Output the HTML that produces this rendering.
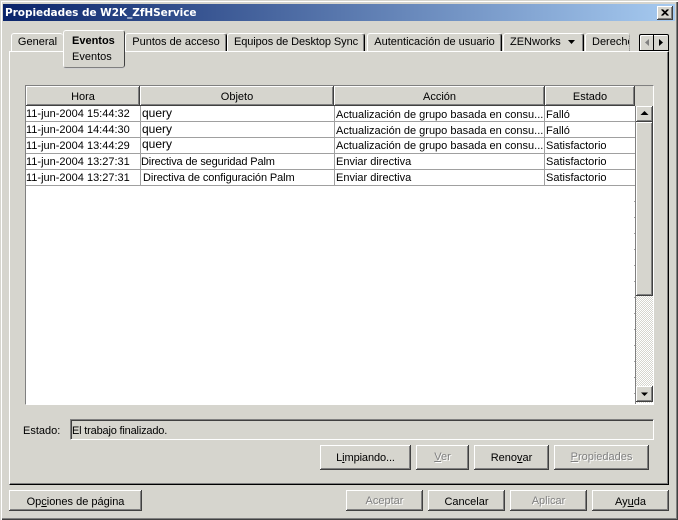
<!DOCTYPE html>
<html lang="es"><head><meta charset="utf-8"><style>
html,body{margin:0;padding:0}
body{width:678px;height:520px;position:relative;overflow:hidden;background:#d6d5ce;font:11px/13px "Liberation Sans",sans-serif;color:#000}
div,span.a{position:absolute;box-sizing:border-box;white-space:nowrap}
.btn{box-shadow:inset -1px -1px 0 #404040,inset 1px 1px 0 #fff,inset -2px -2px 0 #808080;text-align:center;background:#d6d5ce}
.dis{color:#808080;text-shadow:1px 1px 0 #fff}
.tab{top:33px;height:18px;border-top:1px solid #fff;border-left:1px solid #fff;border-right:1px solid #000;box-shadow:inset -1px 0 0 #808080;border-radius:3px 3px 0 0;padding-top:2px;text-align:center}
.h{top:86px;height:20px;background:#d6d5ce;box-shadow:inset -1px -1px 0 #404040,inset 1px 1px 0 #fff,inset -2px -2px 0 #808080;text-align:center;padding-top:4px;line-height:14px}
.t{line-height:13px}
.l{left:26px;width:609px;height:1px;background:#a0a0a0}
.v{top:106px;height:80px;width:1px;background:#a0a0a0}
u{text-decoration:underline}
</style></head><body>
<div style="left:0;top:0;width:678px;height:520px;box-shadow:inset 1px 1px 0 #d6d5ce,inset 2px 2px 0 #fff,inset -1px -1px 0 #404040,inset -2px -2px 0 #808080"></div>
<div style="left:3px;top:4px;width:672px;height:17px;background:linear-gradient(90deg,#0a246a,#a6caf0)"></div>
<div style="left:5px;top:6px;color:#fff;font:bold 10.5px/15px 'DejaVu Sans',sans-serif;letter-spacing:-.04px">Propiedades de W2K_ZfHService</div>
<div class="btn" style="left:657px;top:6px;width:16px;height:14px"><svg width="16" height="14" style="position:absolute;left:0;top:0"><path d="M4.500 3.500l6 6M5.500 3.500l6 6M10.500 3.500l-6 6M11.500 3.500l-6 6" stroke="#000" stroke-width="1" fill="none"/></svg></div>

<!-- panel -->
<div style="left:9px;top:51px;width:660px;height:434px;border-top:1px solid #fff;border-left:1px solid #fff;border-right:1px solid #000;border-bottom:1px solid #000;box-shadow:inset -1px -1px 0 #808080"></div>

<!-- tabs -->
<div class="tab" style="left:11px;width:52px;border-right:0;box-shadow:none">General</div>
<div class="tab" style="left:125px;width:102px">Puntos de acceso</div>
<div class="tab" style="left:227px;width:138px;letter-spacing:-.08px">Equipos de Desktop Sync</div>
<div class="tab" style="left:367px;width:135px">Autenticación de usuario</div>
<div class="tab" style="left:503px;width:81px;text-align:left;padding-left:6px">ZENworks<svg width="8" height="4" style="position:absolute;left:64px;top:6px"><path d="M0 0h7L3.500 4z"/></svg></div>
<div class="tab" style="left:585px;width:45px;border-right:1px dotted #808080;box-shadow:none;text-align:left;padding-left:6px;overflow:hidden">Derecho</div>
<div style="left:63px;top:30px;width:62px;height:38px;background:#d6d5ce;border:1px solid #fff;border-right:1px solid #404040;border-bottom:1px solid #808080;border-radius:3px;box-shadow:0 1px 0 #d0d0d0"></div>
<div class="t" style="left:72px;top:35px;font-weight:bold">Eventos</div>
<div class="t" style="left:72px;top:51px">Eventos</div>
<div style="left:639px;top:34px;width:30px;height:17px;border:1px solid #000;border-radius:2px 2px 0 0;box-shadow:inset 1px 1px 0 #fff;background:#d6d5ce"></div>
<div style="left:653px;top:34px;width:1px;height:16px;background:#000"></div>
<svg width="30" height="17" style="position:absolute;left:639px;top:34px"><path d="M10 5v7L6 8.500z" fill="#808080"/><path d="M20 5v7l4-3.500z" fill="#000"/></svg>

<!-- table -->
<div style="left:25px;top:85px;width:629px;height:320px;background:#fff;border-top:1px solid #808080;border-left:1px solid #808080;border-right:1px solid #fff;border-bottom:1px solid #fff"></div>
<div style="left:26px;top:86px;width:627px;height:20px;background:#d6d5ce"></div>
<div class="h" style="left:26px;width:114px">Hora</div>
<div class="h" style="left:140px;width:194px">Objeto</div>
<div class="h" style="left:334px;width:211px">Acción</div>
<div class="h" style="left:545px;width:90px">Estado</div>

<div class="l" style="top:121px"></div><div class="l" style="top:137px"></div><div class="l" style="top:153px"></div><div class="l" style="top:169px"></div><div class="l" style="top:185px"></div>
<div class="v" style="left:140px"></div><div class="v" style="left:334px"></div><div class="v" style="left:544px"></div>
<div style="left:634px;top:201px;width:1px;height:200px;background:repeating-linear-gradient(#a0a0a0 0 1px,transparent 1px 16px)"></div>

<div class="t" style="left:26px;top:108px">11-jun-2004 15:44:32</div>
<div class="t" style="left:142px;top:107px;font-size:12px">query</div>
<div class="t" style="left:336px;top:109px">Actualización de grupo basada en consu...</div>
<div class="t" style="left:546px;top:109px">Falló</div>
<div class="t" style="left:26px;top:124px">11-jun-2004 14:44:30</div>
<div class="t" style="left:142px;top:123px;font-size:12px">query</div>
<div class="t" style="left:336px;top:125px">Actualización de grupo basada en consu...</div>
<div class="t" style="left:546px;top:125px">Falló</div>
<div class="t" style="left:26px;top:140px">11-jun-2004 13:44:29</div>
<div class="t" style="left:142px;top:138px;font-size:12px">query</div>
<div class="t" style="left:336px;top:140px">Actualización de grupo basada en consu...</div>
<div class="t" style="left:546px;top:140px">Satisfactorio</div>
<div class="t" style="left:26px;top:156px">11-jun-2004 13:27:31</div>
<div class="t" style="left:141px;top:156px;letter-spacing:-.14px">Directiva de seguridad Palm</div>
<div class="t" style="left:336px;top:156px">Enviar directiva</div>
<div class="t" style="left:546px;top:156px">Satisfactorio</div>
<div class="t" style="left:26px;top:172px">11-jun-2004 13:27:31</div>
<div class="t" style="left:143px;top:172px;letter-spacing:-.1px">Directiva de configuración Palm</div>
<div class="t" style="left:336px;top:172px">Enviar directiva</div>
<div class="t" style="left:546px;top:172px">Satisfactorio</div>

<!-- scrollbar -->
<div style="left:635px;top:106px;width:1px;height:298px;background:#808080"></div>
<div style="left:636px;top:106px;width:17px;height:297px;background:repeating-conic-gradient(#d6d5ce 0 25%,#fff 0 50%) 0 0/2px 2px"></div>
<div class="btn" style="left:636px;top:106px;width:17px;height:16px"><svg width="17" height="16" style="position:absolute;left:0;top:0"><path d="M8.500 5l4 4h-8z"/></svg></div>
<div class="btn" style="left:636px;top:122px;width:17px;height:174px"></div>
<div class="btn" style="left:636px;top:386px;width:17px;height:16px"><svg width="17" height="16" style="position:absolute;left:0;top:0"><path d="M5 6.500h7L8.500 10z"/></svg></div>

<!-- status -->
<div class="t" style="left:23px;top:425px">Estado:</div>
<div style="left:70px;top:419px;width:584px;height:21px;border-top:1px solid #808080;border-left:1px solid #808080;border-right:1px solid #fff;border-bottom:1px solid #fff;box-shadow:inset 1px 1px 0 #404040;padding:4px 0 0 1px;line-height:14px;letter-spacing:-.18px">El trabajo finalizado.</div>

<!-- buttons -->
<div class="btn" style="left:320px;top:445px;width:91px;height:25px;padding-top:7px;letter-spacing:-.1px">L<u>i</u>mpiando...</div>
<div class="btn dis" style="left:416px;top:445px;width:53px;height:25px;padding-top:6px"><u>V</u>er</div>
<div class="btn" style="left:474px;top:445px;width:75px;height:25px;padding-top:7px">Reno<u>v</u>ar</div>
<div class="btn dis" style="left:554px;top:445px;width:95px;height:25px;padding-top:6px"><u>P</u>ropiedades</div>

<div class="btn" style="left:9px;top:490px;width:133px;height:21px;padding-top:5px;line-height:15px">Op<u>c</u>iones de página</div>
<div class="btn dis" style="left:346px;top:490px;width:77px;height:21px;padding-top:4px;line-height:15px">Aceptar</div>
<div class="btn" style="left:428px;top:490px;width:77px;height:21px;padding-top:5px;line-height:15px">Cancelar</div>
<div class="btn dis" style="left:510px;top:490px;width:77px;height:21px;padding-top:4px;line-height:15px">Aplicar</div>
<div class="btn" style="left:592px;top:490px;width:77px;height:21px;padding-top:5px;line-height:15px">Ay<u>u</u>da</div>
</body></html>
